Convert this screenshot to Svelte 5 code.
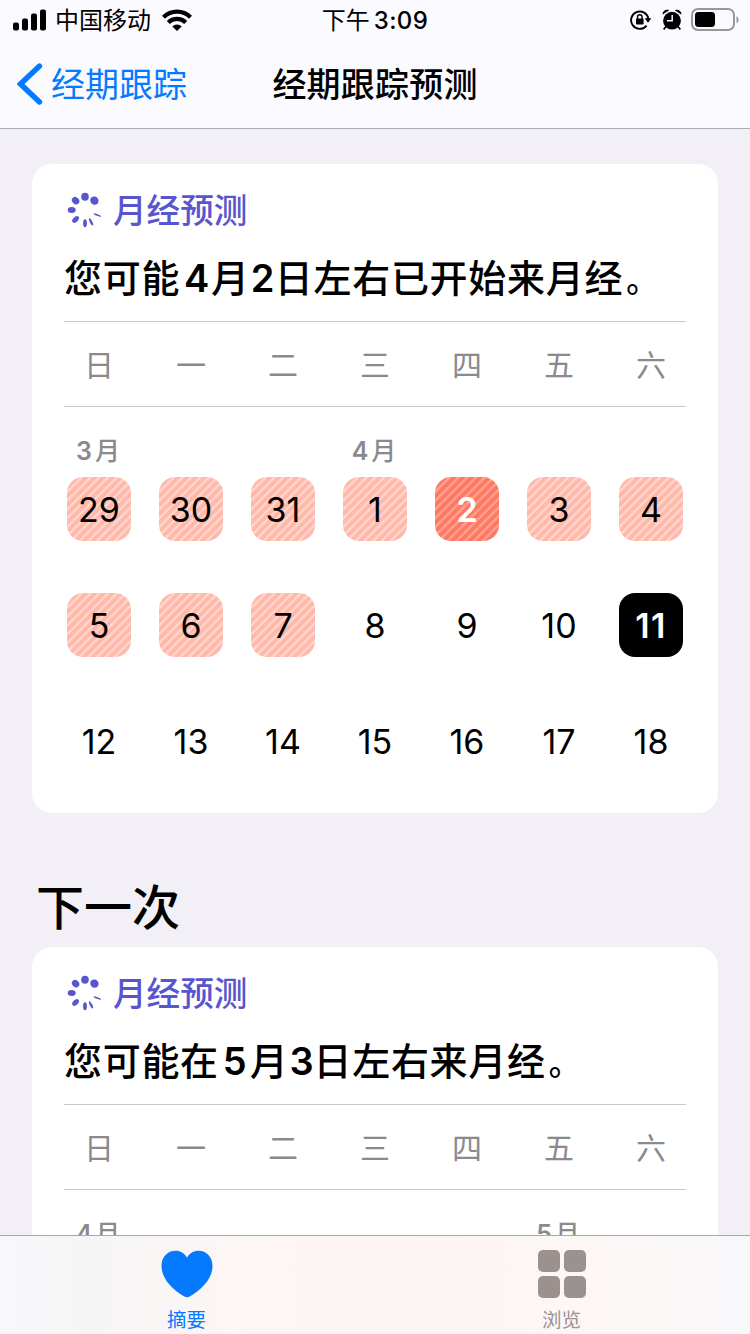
<script>
	const weekdays = ['日', '一', '二', '三', '四', '五', '六'];
	const petals = [
		{ angle: 0, rx: 3.8 },
		{ angle: 45, rx: 4.3 },
		{ angle: 112, rx: 0.9 },
		{ angle: 153, rx: 1.2 },
		{ angle: 180, rx: 1.9 },
		{ angle: 225, rx: 2.5 },
		{ angle: 270, rx: 3 },
		{ angle: 315, rx: 3.4 }
	];

	const cards = [
		{
			title: ['您可能', '4', '月', '2', '日左右已开始来月经'],
			months: { 0: '3', 3: '4' },
			days: [29, 30, 31, 1, 2, 3, 4, 5, 6, 7, 8, 9, 10, 11, 12, 13, 14, 15, 16, 17, 18],
			period: 10,
			start: 4,
			today: 13
		},
		{
			title: ['您可能在', '5', '月', '3', '日左右来月经'],
			months: { 0: '4', 5: '5' },
			days: [],
			period: 0,
			start: -1,
			today: -1
		}
	];
</script>

{#snippet forecast(card)}
	<section class="card">
		<div class="label">
			<svg width="36" height="36" viewBox="-18 -18 36 36">
				{#each petals as p}
					<ellipse cx="0" cy="-13.3" rx={p.rx} ry="4" transform="rotate({p.angle})" />
				{/each}
			</svg>
			<span>月经预测</span>
		</div>
		<h2>
			{#each card.title as part, i}<span class:num={i === 1 || i === 3} class:second={i === 3}
					>{part}</span
				>{/each}<span class="stop">。</span>
		</h2>
		<div class="week grid">
			{#each weekdays as d}
				<span>{d}</span>
			{/each}
		</div>
		<div class="months grid">
			{#each weekdays as _, i}
				<span>{#if card.months[i]}<b>{card.months[i]}</b>月{/if}</span>
			{/each}
		</div>
		<div class="days grid">
			{#each card.days as day, i}
				<span
					class="day"
					class:period={i < card.period}
					class:start={i === card.start}
					class:today={i === card.today}>{day}</span
				>
			{/each}
		</div>
	</section>
{/snippet}

<div class="screen">
	<header>
		<div class="status">
			<div class="carrier">
				<svg width="34" height="22" viewBox="0 0 34 22">
					<rect x="0" y="13.5" width="6" height="8" rx="2" />
					<rect x="9" y="9.5" width="6" height="12" rx="2" />
					<rect x="18" y="4.5" width="6" height="17" rx="2" />
					<rect x="27" y="0.5" width="6" height="21" rx="2" />
				</svg>
				<span>中国移动</span>
				<svg class="wifi" width="30" height="22" viewBox="0 0 30 22">
					<path d="M1.5 8.2a19.3 19.3 0 0 1 27 0" fill="none" stroke="#000" stroke-width="4.3" />
					<path d="M6.3 13.5a12.4 12.4 0 0 1 17.4 0" fill="none" stroke="#000" stroke-width="4.2" />
					<path d="M10.3 17.5a6.8 6.8 0 0 1 9.4 0L15 22z" />
				</svg>
			</div>
			<div class="time">下午<b>3:09</b></div>
			<div class="indicators">
				<svg width="22" height="20" viewBox="0 0 22 20">
					<path d="M16.6 15.6A8.7 8.7 0 1 1 18.4 9" fill="none" stroke="#000" stroke-width="1.9" />
					<path d="M14.6 8.2h6.8l-3.4 4.6z" />
					<rect x="6" y="8.5" width="7.6" height="6" rx="0.8" />
					<path d="M7.5 9V7a2.3 2.3 0 0 1 4.6 0v2" fill="none" stroke="#000" stroke-width="1.4" />
				</svg>
				<svg class="alarm" width="20" height="22" viewBox="0 0 20 22">
					<circle cx="10" cy="11.7" r="8.9" />
					<path d="M.8 5.6C-.2 3 3.8-.6 7.2 1.2zM19.2 5.6C20.2 3 16.2-.6 12.8 1.2z" />
					<path d="M4 17.5l-2.3 3M16 17.5l2.3 3" stroke="#000" stroke-width="1.8" />
					<path d="M10.2 6v5.8H5" fill="none" stroke="#fbfaff" stroke-width="1.5" />
				</svg>
				<svg class="battery" width="48" height="24" viewBox="0 0 48 24">
					<rect x="1" y="1" width="42" height="21" rx="6" fill="none" stroke="#98989c" stroke-width="2" />
					<rect x="4" y="4" width="20" height="15" rx="3.4" />
					<path d="M45.5 8q2.2 1.4 2.2 3.7t-2.2 3.7z" fill="#98989c" />
				</svg>
			</div>
		</div>
		<nav>
			<div class="back">
				<svg width="26" height="42" viewBox="0 0 26 42">
					<path d="M22.5 3L3.5 21l19 18" fill="none" stroke="#067aff" stroke-width="5.4" stroke-linecap="round" />
				</svg>
				<span>经期跟踪</span>
			</div>
			<h1>经期跟踪预测</h1>
		</nav>
	</header>

	<main>
		{@render forecast(cards[0])}
		<h3>下一次</h3>
		{@render forecast(cards[1])}
	</main>

	<footer>
		<div class="tab active">
			<svg width="52" height="48" viewBox="0 0 52 48">
				<path d="M26 7.6C23.4 3 19.3.8 14.6.8 6.5.8.5 7 .5 16c0 12.500 10.500 23.200 22.300 30.300 2.300 1.400 4.100 1.400 6.400 0C41 39.200 51.500 28.500 51.500 16 51.500 7 45.500.8 37.400.8 32.700.8 28.600 3 26 7.600z" />
			</svg>
			<span>摘要</span>
		</div>
		<div class="tab">
			<svg width="48" height="48" viewBox="0 0 48 48">
				<rect width="22" height="22" rx="5" />
				<rect x="26" width="22" height="22" rx="5" />
				<rect y="26" width="22" height="22" rx="5" />
				<rect x="26" y="26" width="22" height="22" rx="5" />
			</svg>
			<span>浏览</span>
		</div>
	</footer>
</div>

<style>
	:global(body) {
		margin: 0;
	}
	.screen {
		display: flex;
		flex-direction: column;
		width: 750px;
		height: 1334px;
		overflow: hidden;
		background: #f2eff7;
		color: #000;
		font-family: Inter, 'Noto Sans CJK SC', sans-serif;
	}
	svg {
		display: block;
		flex: none;
	}
	h1,
	h2,
	h3 {
		margin: 0;
		font-weight: 500;
		white-space: nowrap;
	}
	header {
		flex: none;
		height: 128px;
		background: #fbfaff;
		border-bottom: 1px solid #aeacb3;
	}
	.status {
		display: grid;
		grid-template-columns: 1fr auto 1fr;
		align-items: center;
		height: 40px;
		padding: 0 11px 0 13px;
		font-size: 24px;
		line-height: 42px;
	}
	.carrier,
	.indicators {
		display: flex;
		align-items: center;
	}
	.status svg {
		margin-bottom: 2px;
	}
	.carrier span {
		margin-left: 8px;
	}
	.wifi {
		margin-left: 11px;
	}
	.time {
		margin-right: 2px;
	}
	.time b {
		margin-left: 4px;
		font-weight: 500;
		letter-spacing: 0.4px;
	}
	.indicators {
		justify-content: flex-end;
	}
	.alarm {
		margin-left: 10px;
	}
	.battery {
		margin-left: 9px;
	}
	nav {
		display: grid;
		grid-template-columns: 1fr auto 1fr;
		align-items: center;
		height: 88px;
		font-size: 34px;
		line-height: 90px;
	}
	.back {
		display: flex;
		align-items: center;
		padding-left: 17px;
		color: #067aff;
	}
	.back svg {
		margin-bottom: 2px;
	}
	.back span {
		margin-left: 8px;
	}
	h1 {
		font-size: 34px;
		letter-spacing: 0.2px;
	}
	main {
		flex: 1;
		min-height: 0;
		overflow: hidden;
		padding: 35px 32px 0;
	}
	.card {
		width: 686px;
		height: 649px;
		box-sizing: border-box;
		padding: 24px 32px 0;
		border-radius: 20px;
		background: #fff;
	}
	.label {
		display: flex;
		align-items: center;
		height: 44px;
		padding-left: 3px;
		color: #5856ce;
		fill: #5856ce;
		font-size: 33.6px;
		font-weight: 500;
		line-height: 44px;
	}
	.label span {
		margin-left: 10px;
		padding-top: 2px;
	}
	h2 {
		height: 89px;
		font-size: 38px;
		letter-spacing: 0.7px;
		line-height: 93px;
	}
	.num {
		display: inline-block;
		width: 31px;
		text-indent: 4px;
		font-weight: 600;
	}
	.second {
		width: 25px;
		text-indent: 1px;
	}
	.stop {
		margin-left: 3px;
		font-size: 32px;
	}
	.grid {
		display: grid;
		grid-template-columns: repeat(7, 64px);
		column-gap: 28px;
		padding: 0 3px;
		text-align: center;
	}
	.week {
		height: 84px;
		border-top: 1px solid #c8c8ca;
		border-bottom: 1px solid #c8c8ca;
		color: #8a8a8e;
		font-size: 30px;
		line-height: 87px;
	}
	.months {
		height: 70px;
		color: #8a8a8e;
		font-size: 25px;
		font-weight: 500;
		line-height: 88px;
	}
	.months span {
		margin-left: -2px;
	}
	.months b {
		margin-right: 3px;
		font-weight: 600;
	}
	.days {
		row-gap: 52px;
	}
	.day {
		height: 64px;
		border-radius: 16px;
		font-size: 34px;
		line-height: 66px;
	}
	.period {
		background: repeating-linear-gradient(135deg, #ffb8aa 0 2.8px, #ffd5cc 3.8px 5.2px, #ffb8aa 6.2px);
	}
	.start {
		background: repeating-linear-gradient(135deg, #ff7861 0 2.8px, #ffa091 3.8px 5.2px, #ff7861 6.2px);
		color: #fff;
		font-weight: 600;
	}
	.today {
		background: #000;
		color: #fff;
		font-weight: 600;
		letter-spacing: 1.4px;
	}
	h3 {
		height: 134px;
		padding-left: 4px;
		font-size: 48px;
		line-height: 190px;
	}
	footer {
		display: flex;
		flex: none;
		height: 98px;
		border-top: 1px solid #a9a7ac;
		background: linear-gradient(90deg, #f8f8fb, #f6f5f6 12%, #fcf6f5 30%, #fdf5f3 60%, #fcf7f6 82%, #f8f7fa);
	}
	.tab {
		display: flex;
		flex: 1;
		flex-direction: column;
		align-items: center;
		margin: 0 1px 0 -1px;
		padding-top: 14px;
		color: #9b9290;
		fill: #9b9290;
		font-size: 19.5px;
		line-height: 44px;
	}
	.tab span {
		height: 36px;
	}
	.active {
		color: #067aff;
		fill: #067aff;
	}
</style>
